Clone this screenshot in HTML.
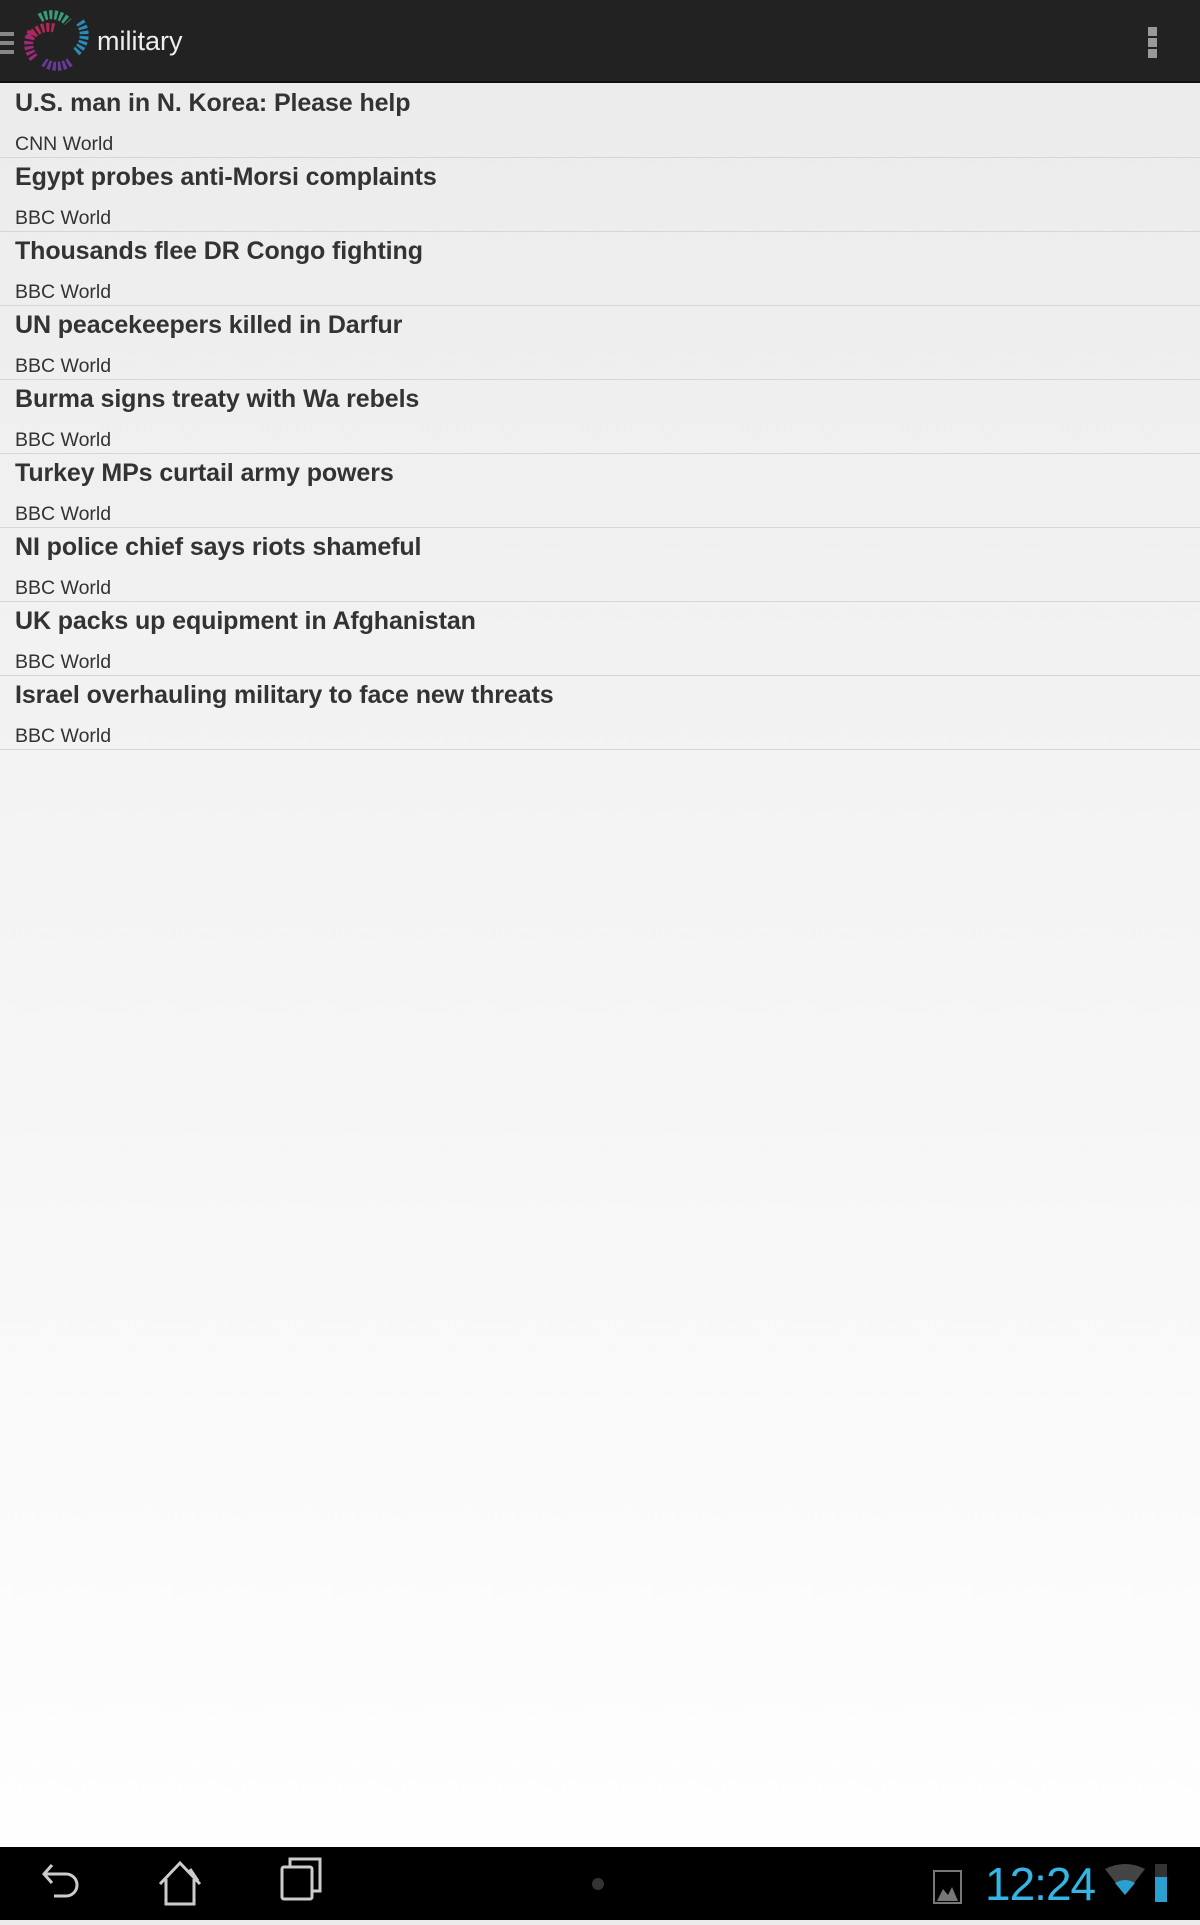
<!DOCTYPE html>
<html><head><style>
*{margin:0;padding:0;box-sizing:border-box}
body{width:1200px;height:1920px;overflow:hidden;font-family:"Liberation Sans",sans-serif;background:linear-gradient(#ebebeb,#fefefe 1847px);position:relative}
.top{position:absolute;left:0;top:0;width:1200px;height:83px;background:#222;border-bottom:2px solid #111}
.title{position:absolute;left:97px;top:26px;color:#eee;font-size:27px}
.row{position:absolute;left:0;width:1200px;height:74px;border-bottom:1px solid #d6d6d6}
.row b{position:absolute;left:15px;top:5px;font-size:25px;color:#333;letter-spacing:-0.1px}
.row span{position:absolute;left:15px;top:49px;font-size:19.5px;color:#333}
.nav{position:absolute;left:0;top:1847px;width:1200px;height:73px;background:#000}
</style></head><body>
<div class="top">
<div style="position:absolute;left:0;top:32px;width:14px;height:4px;background:#888"></div>
<div style="position:absolute;left:0;top:41px;width:14px;height:4px;background:#888"></div>
<div style="position:absolute;left:0;top:50px;width:14px;height:4px;background:#888"></div>
<svg style="position:absolute;left:20px;top:8px" width="70" height="68" viewBox="0 0 70 68" fill="none" stroke-width="9" stroke-dasharray="3 2">
<path d="M20 10 A22 22 0 0 1 48 14" stroke="#3a9a7a"/>
<path d="M60 14 A22 22 0 0 1 56 44" stroke="#2a8ab8"/>
<path d="M50 54 A22 22 0 0 1 24 54" stroke="#6a3a9a"/>
<path d="M14 50 A22 22 0 0 1 12 24" stroke="#a02a7a"/>
<path d="M10 30 A22 22 0 0 1 34 20" stroke="#b0285a"/>
</svg>
<div class="title">military</div>
<div style="position:absolute;left:1148px;top:27px;width:9px;height:9px;background:#999"></div>
<div style="position:absolute;left:1148px;top:38px;width:9px;height:9px;background:#999"></div>
<div style="position:absolute;left:1148px;top:49px;width:9px;height:9px;background:#999"></div>
</div>
<div class="row" style="top:84px"><b>U.S. man in N. Korea: Please help</b><span>CNN World</span></div>
<div class="row" style="top:158px"><b>Egypt probes anti-Morsi complaints</b><span>BBC World</span></div>
<div class="row" style="top:232px"><b>Thousands flee DR Congo fighting</b><span>BBC World</span></div>
<div class="row" style="top:306px"><b>UN peacekeepers killed in Darfur</b><span>BBC World</span></div>
<div class="row" style="top:380px"><b>Burma signs treaty with Wa rebels</b><span>BBC World</span></div>
<div class="row" style="top:454px"><b>Turkey MPs curtail army powers</b><span>BBC World</span></div>
<div class="row" style="top:528px"><b>NI police chief says riots shameful</b><span>BBC World</span></div>
<div class="row" style="top:602px"><b>UK packs up equipment in Afghanistan</b><span>BBC World</span></div>
<div class="row" style="top:676px"><b>Israel overhauling military to face new threats</b><span>BBC World</span></div>
<div class="nav">
<svg width="1200" height="73" fill="none" stroke="#ccc" stroke-width="3">
<path d="M52 18 L44 27 L52 36 M44 27 H66 A11 11 0 0 1 66 49 H54"/>
<path d="M160 37 L180 16 L200 37 M166 32 V57 H194 V32 M190 22 L198 34"/>
<rect x="282" y="20" width="30" height="32" rx="2"/><path d="M290 20 V12 H320 V44 H312"/>
<circle cx="598" cy="37" r="6" fill="#333" stroke="none"/>
<rect x="934" y="24" width="27" height="32" stroke="#777" stroke-width="2"/>
<path d="M937 54 L943 42 L948 48 L952 40 L958 54Z" fill="#777" stroke="none"/>
<path d="M1105 22 Q1125 12 1145 22 L1125 48Z" fill="#444" stroke="none"/>
<path d="M1115 36 Q1125 30 1135 36 L1125 48Z" fill="#2aa0d0" stroke="none"/>
<rect x="1155" y="17" width="12" height="38" fill="#333" stroke="none"/>
<rect x="1155" y="30" width="12" height="25" fill="#2aa0d0" stroke="none"/>
</svg>
<div style="position:absolute;left:985px;top:10px;font-size:46px;color:#33b5e5;letter-spacing:-1px">12:24</div>
</div>
</body></html>
